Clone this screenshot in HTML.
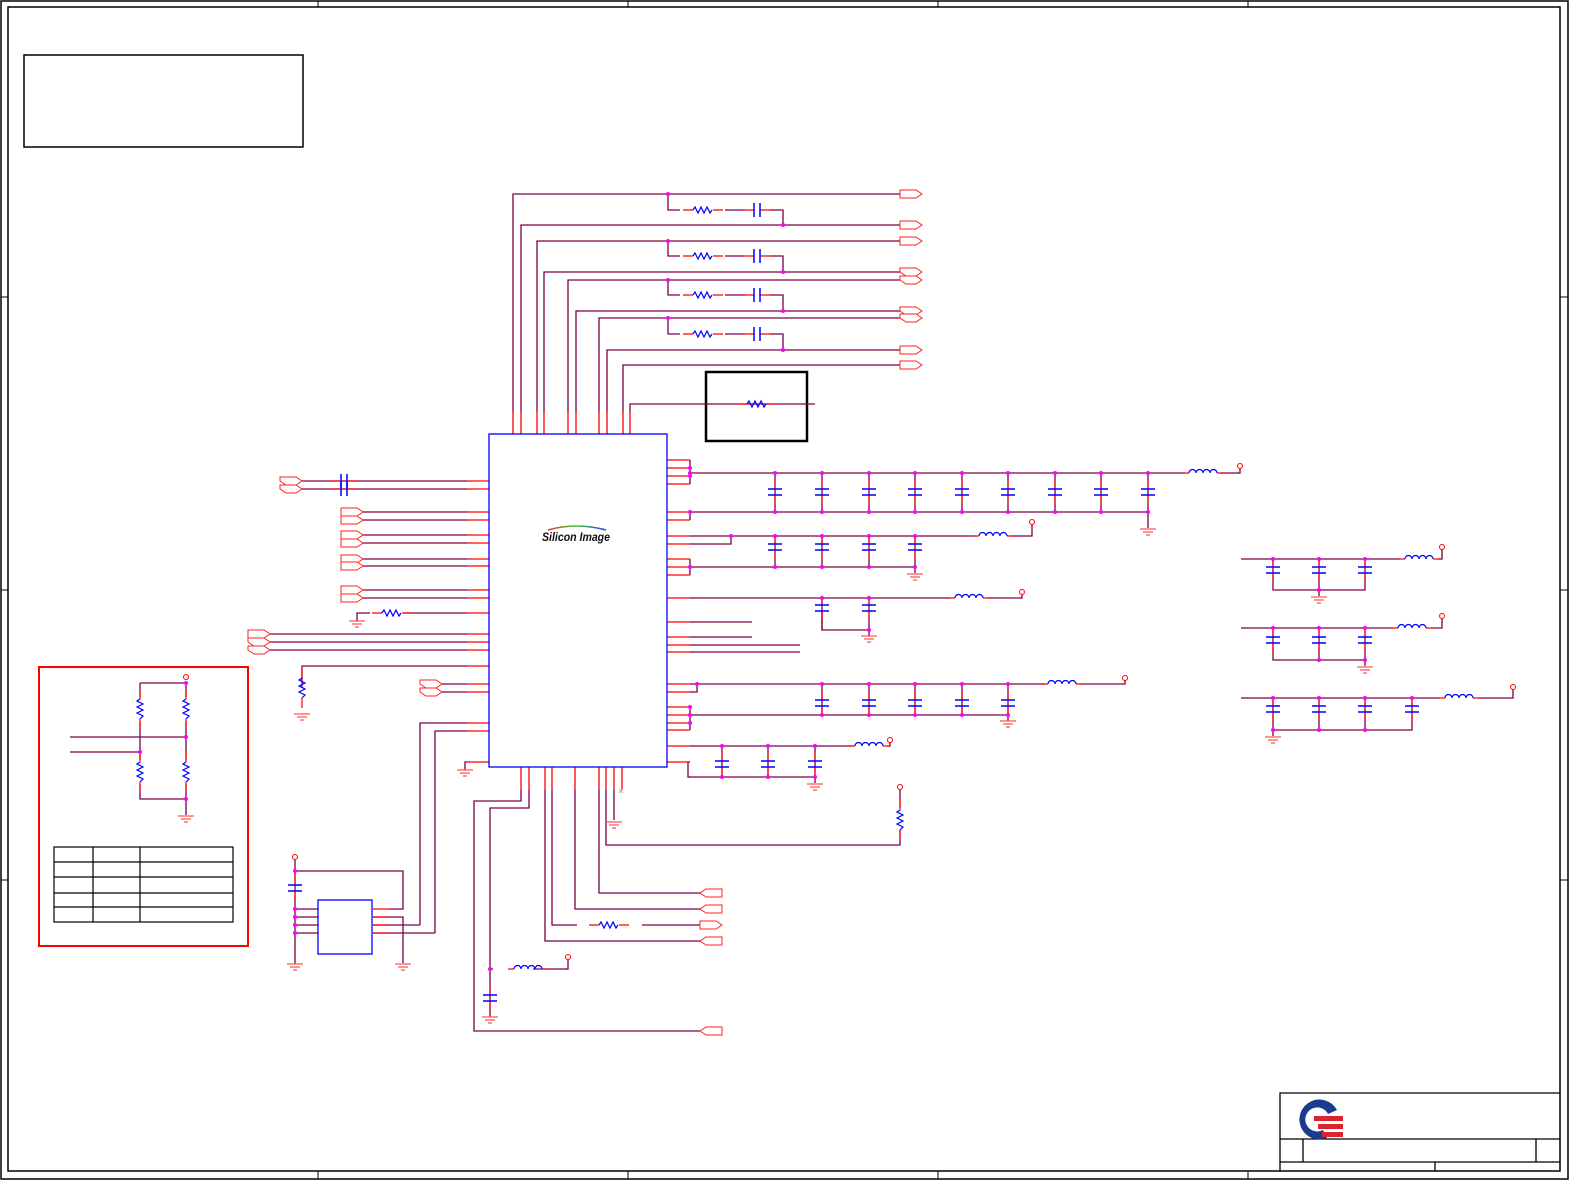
<!DOCTYPE html>
<html><head><meta charset="utf-8"><style>
html,body{margin:0;padding:0;background:#fff;width:1572px;height:1183px;overflow:hidden}
svg{display:block}
</style></head><body>
<svg width="1572" height="1183" viewBox="0 0 1572 1183" xmlns="http://www.w3.org/2000/svg">
<defs>
<g id="R"><path d="M-20,0H-10M10,0H20" stroke="#f00" stroke-width="1.2" fill="none"/><path d="M-10,0l2,-3l3,6l3,-6l3,6l3,-6l3,6l2,-3" stroke="#00f" stroke-width="1.2" fill="none"/></g>
<g id="Rv"><path d="M0,-20V-10M0,10V20" stroke="#f00" stroke-width="1.2" fill="none"/><path d="M0,-10l-3,2l6,3l-6,3l6,3l-6,3l6,3l-3,3" stroke="#00f" stroke-width="1.2" fill="none"/></g>
<g id="C"><path d="M0,-12V-3M0,3V12" stroke="#f00" stroke-width="1.2"/><path d="M-7,-3H7M-7,3H7" stroke="#00f" stroke-width="1.5"/></g>
<g id="Ch"><path d="M-14,0H-3M3,0H14" stroke="#f00" stroke-width="1.2"/><path d="M-3,-7V7M3,-7V7" stroke="#00f" stroke-width="1.5"/></g>
<g id="L"><path d="M-20,0H-14M14,0H20" stroke="#f00" stroke-width="1.2"/><path d="M-14,0a3.5,3.5 0 0 1 7,0a3.5,3.5 0 0 1 7,0a3.5,3.5 0 0 1 7,0a3.5,3.5 0 0 1 7,0" stroke="#00f" stroke-width="1.2" fill="none"/></g>
<g id="G"><path d="M-8,0H8M-5,3H5M-2,6H2" stroke="#f55" stroke-width="1.2"/></g>
<circle id="V" r="2.5" stroke="#f00" fill="#fff" stroke-width="1"/>
<circle id="D" r="2" fill="#f0f"/>
<path id="NR" d="M0,-4H16L22,0L16,4H0Z" stroke="#f22" fill="#fff" stroke-width="1"/>
<path id="NL" d="M22,-4H6L0,0L6,4H22Z" stroke="#f22" fill="#fff" stroke-width="1"/>
<path id="NB" d="M0,-4H16L22,0L16,4H6L0,0Z" stroke="#f22" fill="#fff" stroke-width="1"/>
<linearGradient id="gr"><stop offset="0" stop-color="#e33"/><stop offset=".5" stop-color="#3c3"/><stop offset="1" stop-color="#33f"/></linearGradient>
</defs>

<g fill="none" stroke="#000">
<rect x="1" y="1" width="1567" height="1178" stroke-width="1.5"/>
<rect x="8" y="7" width="1552" height="1164" stroke-width="1.5"/>
<path d="M318,1V7M628,1V7M938,1V7M1248,1V7M318,1171V1179M628,1171V1179M938,1171V1179M1248,1171V1179M1,297H8M1,590H8M1,880H8M1560,297H1568M1560,590H1568M1560,880H1568" stroke-width="1"/>
<rect x="24" y="55" width="279" height="92" stroke-width="1.5"/>
<rect x="706" y="372" width="101" height="69" stroke-width="2.5"/>
</g>

<g fill="none" stroke="#000" stroke-width="1.3">
<path d="M1280,1171V1093H1560M1280,1139H1560M1280,1162H1560M1303,1139V1162M1536,1139V1162M1435,1162V1171"/>
</g>
<path d="M1337,1110a20,20 0 1 0 -10,28l-4,-8a12,12 0 1 1 5,-16z" fill="#1a3c8f"/>
<path d="M1314,1116H1343V1121H1314ZM1318,1124H1343V1129H1318ZM1322,1132H1343V1137H1322Z" fill="#d9262e"/>

<g fill="none" stroke="#7a0046" stroke-width="1.3">
<path d="M513,412V194H900M521,412V225H900M537,412V241H900M544,412V272H900M568,412V280H900M576,412V311H900M599,412V318H900M607,412V350H900M623,412V365H900M630,412V404H815"/>
<path d="M668,194V210H680M725,210H745M770,210H783V225"/>
<path d="M668,241V256H680M725,256H745M770,256H783V272"/>
<path d="M668,280V295H680M725,295H745M770,295H783V311"/>
<path d="M668,318V334H680M725,334H745M770,334H783V350"/>
<path d="M300,481H467M300,489H467M363,512H467M363,520H467M363,535H467M363,543H467M363,559H467M363,566H467M363,590H467M363,598H467M404,613H467M357,621V613H370M270,634H467M270,642H467M270,650H467M302,688V666H467M442,684H467M442,692H467M420,925V723H467M435,933V731H467M465,770V762H467"/>
<path d="M690,460V484M690,473H1185M1220,473H1240V466M690,512V520M690,512H1148V528"/>
<path d="M690,536H975M731,536V544H690M1010,536H1032V522M690,559V575M690,567H915V573"/>
<path d="M690,598H950M987,598H1022V592M822,610V630H869V636"/>
<path d="M690,622H752M690,637H752M690,645H800M690,652H800"/>
<path d="M690,684H1045M1080,684H1125V678M697,684V692H690M690,707V730M690,715H1008V721"/>
<path d="M690,746H852M887,746H890V740M690,762H688V777H815V783"/>
<path d="M822,473V512M869,473V512M915,473V512M962,473V512M1008,473V512M1055,473V512M1101,473V512M1148,473V512M775,473V512"/>
<path d="M775,536V567M822,536V567M869,536V567M915,536V567"/>
<path d="M822,598V630M869,598V630"/>
<path d="M822,684V715M869,684V715M915,684V715M962,684V715M1008,684V715"/>
<path d="M722,746V777M768,746V777M815,746V777"/>
<path d="M521,790V801H474V1031H700M529,790V808H490V1017M490,969H493M533,969H568V958M545,790V941H700M552,790V925H577M642,925H700M575,790V909H700M599,790V893H700M606,790V845H900V830M900,790V808M614,790V820"/>
<path d="M295,860V964M295,871H403V909H390M373,917H403V963M373,925H420M373,933H435M295,909H318M295,917H318M295,925H318M295,933H318"/>
<path d="M140,683H186M140,683V697M140,721V760M140,784V799H186M186,683V697M186,721V760M186,784V815M70,737H186M70,752H140"/>
<path d="M1241,559H1400M1438,559H1442V548M1273,559V590H1365V559M1319,559V590V596"/>
<path d="M1241,628H1393M1431,628H1442V617M1273,628V660H1365V628M1319,628V660M1365,660V666"/>
<path d="M1241,698H1440M1478,698H1513V688M1273,698V730H1412V698M1319,698V730M1365,698V730M1273,730V736"/>
</g>

<g stroke="#f00" stroke-width="1.3">
<path d="M513,412V434M521,412V434M537,412V434M544,412V434M568,412V434M576,412V434M599,412V434M607,412V434M623,412V434M630,412V434"/>
<path d="M467,481H489M467,489H489M467,512H489M467,520H489M467,535H489M467,543H489M467,559H489M467,566H489M467,590H489M467,598H489M467,613H489M467,634H489M467,642H489M467,650H489M467,666H489M467,684H489M467,692H489M467,723H489M467,731H489M467,762H489"/>
<path d="M667,460H690M667,468H690M667,476H690M667,484H690M667,512H690M667,520H690M667,536H690M667,544H690M667,559H690M667,567H690M667,575H690M667,598H690M667,622H690M667,637H690M667,645H690M667,652H690M667,684H690M667,692H690M667,707H690M667,715H690M667,723H690M667,730H690M667,746H690M667,762H690"/>
<path d="M521,767V790M529,767V790M545,767V790M552,767V790M575,767V790M599,767V790M606,767V790M614,767V790M622,767V790"/>
<path d="M373,909H390M373,917H390M373,925H390M373,933H390"/>
</g>
<path d="M619,789l4,4m0,-4l-4,4" stroke="#caa" stroke-width="1"/>

<rect x="489" y="434" width="178" height="333" fill="none" stroke="#00f" stroke-width="1.3"/>
<rect x="318" y="900" width="54" height="54" fill="none" stroke="#00f" stroke-width="1.3"/>
<text x="542" y="541" font-family="Liberation Sans, sans-serif" font-size="12" font-weight="bold" font-style="italic" fill="#111" textLength="68" lengthAdjust="spacingAndGlyphs">Silicon Image</text>
<path d="M548,530Q576,522 606,530" stroke="url(#gr)" fill="none" stroke-width="1.5"/>

<rect x="39" y="667" width="209" height="279" fill="none" stroke="#f00" stroke-width="2"/>
<g fill="none" stroke="#000" stroke-width="1.2">
<rect x="54" y="847" width="179" height="75"/>
<path d="M54,862H233M54,877H233M54,893H233M54,907H233M93,847V922M140,847V922"/>
</g>

<g>
<use href="#R" x="703" y="210"/><use href="#Ch" x="757" y="210"/>
<use href="#R" x="703" y="256"/><use href="#Ch" x="757" y="256"/>
<use href="#R" x="703" y="295"/><use href="#Ch" x="757" y="295"/>
<use href="#R" x="703" y="334"/><use href="#Ch" x="757" y="334"/>
<use href="#R" x="757" y="404"/>
<use href="#Ch" x="344" y="481"/><use href="#Ch" x="344" y="489"/>
<use href="#R" x="392" y="613"/><use href="#G" x="357" y="621"/>
<use href="#Rv" x="302" y="688"/><use href="#G" x="302" y="714"/>
<use href="#G" x="465" y="770"/>
<use href="#L" x="1203" y="473"/><use href="#V" x="1240" y="466"/><use href="#G" x="1148" y="529"/>
<use href="#C" x="775" y="492"/><use href="#C" x="822" y="492"/><use href="#C" x="869" y="492"/><use href="#C" x="915" y="492"/><use href="#C" x="962" y="492"/><use href="#C" x="1008" y="492"/><use href="#C" x="1055" y="492"/><use href="#C" x="1101" y="492"/><use href="#C" x="1148" y="492"/>
<use href="#L" x="993" y="536"/><use href="#V" x="1032" y="522"/><use href="#G" x="915" y="574"/>
<use href="#C" x="775" y="547"/><use href="#C" x="822" y="547"/><use href="#C" x="869" y="547"/><use href="#C" x="915" y="547"/>
<use href="#L" x="969" y="598"/><use href="#V" x="1022" y="592"/><use href="#G" x="869" y="636"/>
<use href="#C" x="822" y="608"/><use href="#C" x="869" y="608"/>
<use href="#L" x="1062" y="684"/><use href="#V" x="1125" y="678"/><use href="#G" x="1008" y="721"/>
<use href="#C" x="822" y="703"/><use href="#C" x="869" y="703"/><use href="#C" x="915" y="703"/><use href="#C" x="962" y="703"/><use href="#C" x="1008" y="703"/>
<use href="#L" x="869" y="746"/><use href="#V" x="890" y="740"/><use href="#G" x="815" y="784"/>
<use href="#C" x="722" y="764"/><use href="#C" x="768" y="764"/><use href="#C" x="815" y="764"/>
<use href="#Rv" x="900" y="820"/><use href="#V" x="900" y="787"/>
<use href="#G" x="614" y="822"/>
<use href="#R" x="609" y="925"/>
<use href="#L" x="528" y="969"/><use href="#V" x="568" y="957"/>
<use href="#C" x="490" y="998"/><use href="#G" x="490" y="1017"/>
<use href="#V" x="295" y="857"/><use href="#C" x="295" y="888"/><use href="#G" x="295" y="964"/><use href="#G" x="403" y="964"/>
<use href="#V" x="186" y="677"/><use href="#Rv" x="140" y="709"/><use href="#Rv" x="186" y="709"/><use href="#Rv" x="140" y="772"/><use href="#Rv" x="186" y="772"/><use href="#G" x="186" y="816"/>
<use href="#L" x="1419" y="559"/><use href="#V" x="1442" y="547"/><use href="#G" x="1319" y="597"/>
<use href="#C" x="1273" y="570"/><use href="#C" x="1319" y="570"/><use href="#C" x="1365" y="570"/>
<use href="#L" x="1412" y="628"/><use href="#V" x="1442" y="616"/><use href="#G" x="1365" y="667"/>
<use href="#C" x="1273" y="640"/><use href="#C" x="1319" y="640"/><use href="#C" x="1365" y="640"/>
<use href="#L" x="1459" y="698"/><use href="#V" x="1513" y="687"/><use href="#G" x="1273" y="737"/>
<use href="#C" x="1273" y="709"/><use href="#C" x="1319" y="709"/><use href="#C" x="1365" y="709"/><use href="#C" x="1412" y="709"/>
</g>

<g>
<use href="#NR" x="900" y="194"/><use href="#NR" x="900" y="225"/><use href="#NR" x="900" y="241"/><use href="#NB" x="900" y="272"/><use href="#NB" x="900" y="280"/><use href="#NB" x="900" y="311"/><use href="#NB" x="900" y="318"/><use href="#NR" x="900" y="350"/><use href="#NR" x="900" y="365"/>
<use href="#NB" x="280" y="481"/><use href="#NB" x="280" y="489"/>
<use href="#NR" x="341" y="512"/><use href="#NR" x="341" y="520"/><use href="#NR" x="341" y="535"/><use href="#NR" x="341" y="543"/><use href="#NR" x="341" y="559"/><use href="#NR" x="341" y="566"/><use href="#NR" x="341" y="590"/><use href="#NR" x="341" y="598"/>
<use href="#NR" x="248" y="634"/><use href="#NB" x="248" y="642"/><use href="#NB" x="248" y="650"/>
<use href="#NB" x="420" y="684"/><use href="#NB" x="420" y="692"/>
<use href="#NL" x="700" y="893"/><use href="#NL" x="700" y="909"/><use href="#NR" x="700" y="925"/><use href="#NL" x="700" y="941"/><use href="#NL" x="700" y="1031"/>
</g>

<g>
<use href="#D" x="668" y="194"/><use href="#D" x="783" y="225"/><use href="#D" x="668" y="241"/><use href="#D" x="783" y="272"/><use href="#D" x="668" y="280"/><use href="#D" x="783" y="311"/><use href="#D" x="668" y="318"/><use href="#D" x="783" y="350"/>
<use href="#D" x="690" y="468"/><use href="#D" x="690" y="473"/><use href="#D" x="690" y="476"/><use href="#D" x="690" y="512"/>
<use href="#D" x="775" y="473"/><use href="#D" x="822" y="473"/><use href="#D" x="869" y="473"/><use href="#D" x="915" y="473"/><use href="#D" x="962" y="473"/><use href="#D" x="1008" y="473"/><use href="#D" x="1055" y="473"/><use href="#D" x="1101" y="473"/><use href="#D" x="1148" y="473"/>
<use href="#D" x="775" y="512"/><use href="#D" x="822" y="512"/><use href="#D" x="869" y="512"/><use href="#D" x="915" y="512"/><use href="#D" x="962" y="512"/><use href="#D" x="1008" y="512"/><use href="#D" x="1055" y="512"/><use href="#D" x="1101" y="512"/><use href="#D" x="1148" y="512"/>
<use href="#D" x="731" y="536"/><use href="#D" x="775" y="536"/><use href="#D" x="822" y="536"/><use href="#D" x="869" y="536"/><use href="#D" x="915" y="536"/>
<use href="#D" x="690" y="567"/><use href="#D" x="775" y="567"/><use href="#D" x="822" y="567"/><use href="#D" x="869" y="567"/><use href="#D" x="915" y="567"/>
<use href="#D" x="822" y="598"/><use href="#D" x="869" y="598"/><use href="#D" x="869" y="630"/>
<use href="#D" x="697" y="684"/><use href="#D" x="822" y="684"/><use href="#D" x="869" y="684"/><use href="#D" x="915" y="684"/><use href="#D" x="962" y="684"/><use href="#D" x="1008" y="684"/>
<use href="#D" x="690" y="715"/><use href="#D" x="690" y="723"/><use href="#D" x="690" y="707"/><use href="#D" x="822" y="715"/><use href="#D" x="869" y="715"/><use href="#D" x="915" y="715"/><use href="#D" x="962" y="715"/><use href="#D" x="1008" y="715"/>
<use href="#D" x="722" y="746"/><use href="#D" x="768" y="746"/><use href="#D" x="815" y="746"/><use href="#D" x="722" y="777"/><use href="#D" x="768" y="777"/><use href="#D" x="815" y="777"/>
<use href="#D" x="490" y="969"/>
<use href="#D" x="295" y="871"/><use href="#D" x="295" y="909"/><use href="#D" x="295" y="917"/><use href="#D" x="295" y="925"/><use href="#D" x="295" y="933"/>
<use href="#D" x="186" y="683"/><use href="#D" x="186" y="737"/><use href="#D" x="140" y="752"/><use href="#D" x="186" y="799"/>
<use href="#D" x="1273" y="559"/><use href="#D" x="1319" y="559"/><use href="#D" x="1365" y="559"/><use href="#D" x="1319" y="590"/>
<use href="#D" x="1273" y="628"/><use href="#D" x="1319" y="628"/><use href="#D" x="1365" y="628"/><use href="#D" x="1319" y="660"/><use href="#D" x="1365" y="660"/>
<use href="#D" x="1273" y="698"/><use href="#D" x="1319" y="698"/><use href="#D" x="1365" y="698"/><use href="#D" x="1412" y="698"/><use href="#D" x="1273" y="730"/><use href="#D" x="1319" y="730"/><use href="#D" x="1365" y="730"/>
</g>
</svg>
</body></html>
